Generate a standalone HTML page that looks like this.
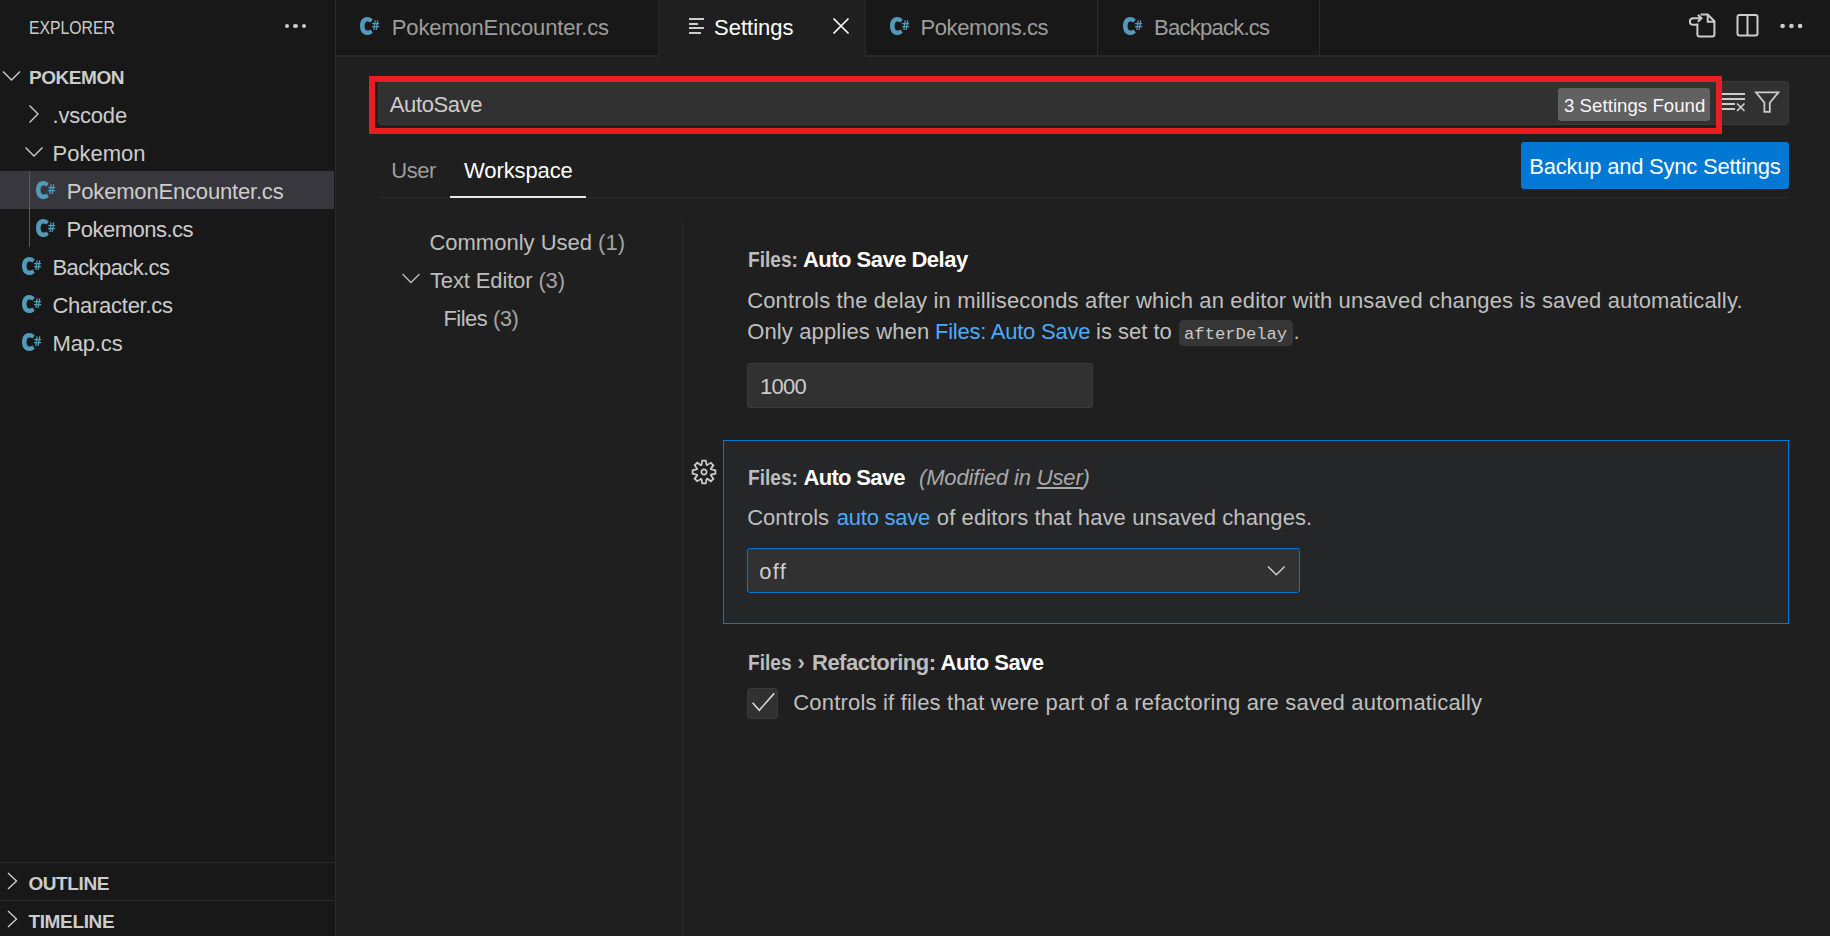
<!DOCTYPE html>
<html><head><meta charset="utf-8">
<style>
*{margin:0;padding:0;box-sizing:border-box}
html,body{width:1830px;height:936px;overflow:hidden;background:#1f1f1f;font-family:"Liberation Sans",sans-serif;color:#cccccc}
.a{position:absolute}
.b{position:absolute;line-height:0;white-space:nowrap;margin-top:1px}
.f22{font-size:22px}
.f19{font-size:19px}
svg{position:absolute;overflow:visible}
.sx{transform-origin:0 0}
</style></head><body>
<svg width="0" height="0" style="position:absolute">
 <defs>
  <g id="csi">
   <path fill="#519aba" d="M12.8 2.5C11.3 0.8 9.2 0 6.8 0C2.8 0 0 3.8 0 9C0 14.2 2.8 18 6.8 18C9.2 18 11.3 17.2 12.8 15.4L10.5 12.6C9.7 13.3 8.5 13.6 7.3 13.6C5.6 13.6 4.6 11.8 4.6 9C4.6 6.2 5.6 4.4 7.3 4.4C8.5 4.4 9.7 4.8 10.5 5.4Z"/>
   <path d="M15.1 3.3L13.9 13M17.7 3.3L16.2 13M12.1 6.7H19.2M12.1 9.7H19.2" stroke="#519aba" stroke-width="1.3" fill="none"/>
  </g>
 </defs>
</svg>

<!-- SIDEBAR -->
<div class="a" style="left:0;top:0;width:335px;height:936px;background:#181818"></div>
<div class="a" style="left:335px;top:0;width:1px;height:936px;background:#2b2b2b"></div>
<div class="b f19" style="left:29px;top:27.4px;color:#cccccc;transform:scaleX(0.83);transform-origin:0 0">EXPLORER</div>
<div class="a" style="left:284.5px;top:23.7px;width:4.6px;height:4.6px;border-radius:50%;background:#cccccc"></div>
<div class="a" style="left:293.3px;top:23.7px;width:4.6px;height:4.6px;border-radius:50%;background:#cccccc"></div>
<div class="a" style="left:301.9px;top:23.7px;width:4.6px;height:4.6px;border-radius:50%;background:#cccccc"></div>

<svg style="left:0;top:0" width="40" height="100"><path d="M3 71.5L11.5 80L20 71.5" stroke="#cccccc" stroke-width="1.4" fill="none"/></svg>
<div class="b f19" style="left:29px;top:77.4px;font-weight:bold;color:#cccccc;letter-spacing:-0.45px">POKEMON</div>

<svg style="left:0;top:0" width="60" height="200"><path d="M29.5 105.5L38 114L29.5 122.5" stroke="#cccccc" stroke-width="1.4" fill="none"/><path d="M25.5 147.5L34 156L42.5 147.5" stroke="#cccccc" stroke-width="1.4" fill="none"/></svg>
<div class="b f22" style="left:52.5px;top:115.4px;letter-spacing:-0.2px">.vscode</div>
<div class="b f22" style="left:52.5px;top:153.4px">Pokemon</div>

<div class="a" style="left:0;top:171px;width:334px;height:38px;background:#37373d"></div>
<div class="a" style="left:29px;top:171px;width:1px;height:76px;background:#585858"></div>
<svg style="left:35.8px;top:181px" width="20" height="18"><use href="#csi"/></svg>
<div class="b f22" style="left:66.8px;top:191.4px;letter-spacing:-0.18px">PokemonEncounter.cs</div>
<svg style="left:35.8px;top:219px" width="20" height="18"><use href="#csi"/></svg>
<div class="b f22" style="left:66.5px;top:229.4px;letter-spacing:-0.5px">Pokemons.cs</div>
<svg style="left:22px;top:257px" width="20" height="18"><use href="#csi"/></svg>
<div class="b f22" style="left:52.5px;top:267.4px;letter-spacing:-0.6px">Backpack.cs</div>
<svg style="left:22px;top:295px" width="20" height="18"><use href="#csi"/></svg>
<div class="b f22" style="left:52.5px;top:305.4px;letter-spacing:-0.27px">Character.cs</div>
<svg style="left:22px;top:333px" width="20" height="18"><use href="#csi"/></svg>
<div class="b f22" style="left:52.5px;top:343.4px;letter-spacing:-0.15px">Map.cs</div>

<div class="a" style="left:0;top:862px;width:334px;height:1px;background:#2b2b2b"></div>
<div class="a" style="left:0;top:900px;width:334px;height:1px;background:#2b2b2b"></div>
<svg style="left:0;top:0" width="40" height="936"><path d="M8 873L16.5 881L8 889" stroke="#cccccc" stroke-width="1.4" fill="none"/><path d="M8 911L16.5 919L8 927" stroke="#cccccc" stroke-width="1.4" fill="none"/></svg>
<div class="b f19" style="left:28.4px;top:882.9px;font-weight:bold;letter-spacing:-0.4px">OUTLINE</div>
<div class="b f19" style="left:28.4px;top:920.7px;font-weight:bold;letter-spacing:-0.35px">TIMELINE</div>

<!-- TABS -->
<div class="a" style="left:336px;top:0;width:1494px;height:55px;background:#181818"></div>
<div class="a" style="left:336px;top:55px;width:1494px;height:2px;background:#2b2b2b"></div>
<div class="a" style="left:658px;top:0;width:1px;height:55px;background:#2b2b2b"></div>
<div class="a" style="left:659px;top:0;width:206px;height:57px;background:#1f1f1f"></div>
<div class="a" style="left:865px;top:0;width:1px;height:55px;background:#2b2b2b"></div>
<div class="a" style="left:1097px;top:0;width:1px;height:55px;background:#2b2b2b"></div>
<div class="a" style="left:1319px;top:0;width:1px;height:55px;background:#2b2b2b"></div>

<svg style="left:360.4px;top:17.2px" width="20" height="18"><use href="#csi"/></svg>
<div class="b f22" style="left:391.8px;top:27.4px;color:#9d9d9d;letter-spacing:-0.16px">PokemonEncounter.cs</div>
<svg style="left:0;top:0" width="720" height="50"><path d="M689 19H704M689 24H698M689 28H704M689 33H701" stroke="#cccccc" stroke-width="2" fill="none"/></svg>
<div class="b f22" style="left:714px;top:27.4px;color:#ffffff">Settings</div>
<svg style="left:0;top:0" width="860" height="50"><path d="M833.5 18.5L848.5 33.5M848.5 18.5L833.5 33.5" stroke="#ffffff" stroke-width="1.7" fill="none"/></svg>
<svg style="left:890px;top:17.2px" width="20" height="18"><use href="#csi"/></svg>
<div class="b f22" style="left:920.5px;top:27.4px;color:#9d9d9d;letter-spacing:-0.4px">Pokemons.cs</div>
<svg style="left:1122.6px;top:17px" width="20" height="18"><use href="#csi"/></svg>
<div class="b f22" style="left:1154px;top:27.4px;color:#9d9d9d;letter-spacing:-0.75px">Backpack.cs</div>

<svg style="left:0;top:0" width="1830" height="50">
 <g stroke="#cccccc" stroke-width="2" fill="none">
  <path d="M1697.4 23.5V34.6Q1697.4 36.6 1699.4 36.6H1712.4Q1714.4 36.6 1714.4 34.6V21.2L1707.7 14.5H1700.6"/>
  <path d="M1707.7 14.5V21.7H1714.4"/>
  <path d="M1697.5 24.8H1693.5Q1689.9 24.8 1689.9 21.5Q1689.9 18.2 1693.5 18.2H1701.2M1697.9 14.7L1701.5 18.2L1697.9 21.7"/>
  <rect x="1737.5" y="14.9" width="20" height="20.7" rx="2"/>
  <path d="M1747.5 14.9V35.6"/>
 </g>
 <circle cx="1782.6" cy="26" r="2.3" fill="#cccccc"/>
 <circle cx="1791.4" cy="26" r="2.3" fill="#cccccc"/>
 <circle cx="1800.1" cy="26" r="2.3" fill="#cccccc"/>
</svg>

<!-- SEARCH -->
<div class="a" style="left:378px;top:81px;width:1411px;height:44px;background:#313131;border:1px solid #3c3c3c;border-radius:4px"></div>
<div class="a" style="left:369px;top:76px;width:353px;height:58px;border:6px solid #e81d25;width:1353px"></div>
<div class="b f22" style="left:389.8px;top:104.2px;color:#cccccc;letter-spacing:-0.38px">AutoSave</div>
<div class="a" style="left:1558px;top:88px;width:152px;height:33px;background:#616161;border-radius:3px"></div>
<div class="b" style="left:1564px;top:104.8px;color:#f8f8f8;font-size:18.6px;letter-spacing:0.05px">3 Settings Found</div>
<svg style="left:0;top:0" width="1830" height="140">
 <g stroke="#cccccc" stroke-width="2" fill="none">
  <path d="M1722 94H1745M1722 99H1745M1722 104H1735M1722 109H1735"/>
  <path d="M1737 103.5L1744.5 111M1744.5 103.5L1737 111" stroke-width="1.7"/>
  <path d="M1756 92.4H1778.4L1769.8 102.8V111.8H1764.4V102.8Z" stroke-width="1.8"/>
 </g>
</svg>

<!-- USER/WORKSPACE -->
<div class="b f22" style="left:391.3px;top:170.4px;color:#9d9d9d;letter-spacing:-0.45px">User</div>
<div class="b f22" style="left:464px;top:170.4px;color:#ffffff;letter-spacing:-0.1px">Workspace</div>
<div class="a" style="left:378px;top:197px;width:1411px;height:1px;background:#2b2b2b"></div>
<div class="a" style="left:450px;top:196px;width:136px;height:2px;background:#e7e7e7"></div>
<div class="a" style="left:1521px;top:142px;width:268px;height:47px;background:#0078d4;border-radius:3px"></div>
<div class="b f22" style="left:1529.3px;top:166.4px;color:#ffffff;letter-spacing:-0.23px">Backup and Sync Settings</div>

<!-- TOC -->
<div class="a" style="left:682px;top:222px;width:1px;height:714px;background:#2b2b2b"></div>
<div class="b f22" style="left:429.4px;top:242.4px;color:#bdbdbd">Commonly Used <span style="color:#a3a3a3">(1)</span></div>
<svg style="left:0;top:0" width="440" height="300"><path d="M402.5 274L411 282.5L419.5 274" stroke="#bbbbbb" stroke-width="1.4" fill="none"/></svg>
<div class="b f22" style="left:430px;top:280.4px;color:#bdbdbd;letter-spacing:-0.14px">Text Editor <span style="color:#a3a3a3">(3)</span></div>
<div class="b f22" style="left:443.4px;top:318.4px;color:#bdbdbd;letter-spacing:-0.5px">Files <span style="color:#a3a3a3">(3)</span></div>

<!-- SETTING 1 -->
<div class="b f22 sx" id="t1a" style="left:748px;top:259.1px;font-weight:bold;color:#bdbdbd;transform:scaleX(0.87)">Files:</div>
<div class="b f22" id="t1b" style="left:803px;top:259.1px;font-weight:bold;color:#ffffff;letter-spacing:-0.52px">Auto Save Delay</div>
<div class="b f22" style="left:747.2px;top:300.1px;color:#bfbfbf;letter-spacing:0.15px">Controls the delay in milliseconds after which an editor with unsaved changes is saved automatically.</div>
<div class="b f22" id="d1a" style="left:747.2px;top:331.2px;color:#bfbfbf;letter-spacing:0.14px">Only applies when</div>
<div class="b f22" id="d1b" style="left:935px;top:331.2px;color:#4daafc;letter-spacing:-0.24px">Files: Auto Save</div>
<div class="b f22" id="d1c" style="left:1096px;top:331.2px;color:#bfbfbf">is set to</div>
<div class="a" style="left:1179px;top:320px;width:114px;height:26px;background:#363636;border-radius:5px"></div>
<div class="b" id="d1d" style="left:1184px;top:333.8px;color:#c8c8c8;font-family:'Liberation Mono',monospace;font-size:17.2px">afterDelay</div>
<div class="b f22" style="left:1293.5px;top:331.2px;color:#bfbfbf">.</div>
<div class="a" style="left:747px;top:363px;width:346px;height:45px;background:#313131;border:1px solid #3c3c3c;border-radius:3px"></div>
<div class="b f22" style="left:760px;top:386.1px;color:#cccccc;letter-spacing:-0.7px">1000</div>

<!-- SETTING 2 -->
<div class="a" style="left:723px;top:440px;width:1066px;height:184px;border:1px solid #0078d4;background:#252628"></div>
<div class="b f22 sx" id="t2a" style="left:748px;top:477.4px;font-weight:bold;color:#bdbdbd;transform:scaleX(0.87)">Files:</div>
<div class="b f22" id="t2b" style="left:803.5px;top:477.4px;font-weight:bold;color:#ffffff;letter-spacing:-0.7px">Auto Save</div>
<div class="b f22" id="t2c" style="left:919px;top:477.4px;font-style:italic;color:#a8a8a8;letter-spacing:-0.16px">(Modified in <span style="text-decoration:underline;text-underline-offset:2px">User</span>)</div>
<div class="b f22" id="d2a" style="left:747.2px;top:516.8px;color:#bfbfbf">Controls</div>
<div class="b f22" id="d2b" style="left:836.8px;top:516.8px;color:#4daafc;letter-spacing:-0.25px">auto save</div>
<div class="b f22" id="d2c" style="left:936.8px;top:516.8px;color:#bfbfbf;letter-spacing:0.1px">of editors that have unsaved changes.</div>
<div class="a" style="left:747px;top:548px;width:553px;height:45px;background:#313131;border:1px solid #0078d4;border-radius:3px"></div>
<div class="b f22" style="left:759.2px;top:570.7px;color:#cccccc;letter-spacing:1.3px">off</div>
<svg style="left:0;top:0" width="1300" height="600"><path d="M1268 566.6L1276.3 574.8L1284.6 566.6" stroke="#d0d0d0" stroke-width="1.4" fill="none"/></svg>
<svg style="left:690.4px;top:457.9px" width="28" height="28" viewBox="0 0 16 16"><path fill="#cccccc" d="M9.1 4.4L8.6 2H7.4l-.5 2.4-.7.3-2-1.3-.9.8 1.3 2-.2.7-2.4.5v1.2l2.4.5.3.8-1.3 2 .8.8 2-1.3.8.3.4 2.3h1.2l.5-2.4.8-.3 2 1.3.8-.8-1.3-2 .3-.8 2.3-.4V7.4l-2.4-.5-.3-.8 1.3-2-.8-.8-2 1.3-.7-.2zM9.4 1l.5 2.4L12 2.1l2 2-1.4 2.1 2.4.4v2.8l-2.4.5L14 12l-2 2-2.1-1.4-.5 2.4H6.6l-.5-2.4L4 13.9l-2-2 1.4-2.1L1 9.4V6.6l2.4-.5L2.1 4l2-2 2.1 1.4.4-2.4h2.8zm.6 7c0 1.1-.9 2-2 2s-2-.9-2-2 .9-2 2-2 2 .9 2 2zM8 9c.6 0 1-.4 1-1s-.4-1-1-1-1 .4-1 1 .4 1 1 1z"/></svg>

<!-- SETTING 3 -->
<div class="b f22 sx" id="t3a" style="left:748px;top:661.9px;font-weight:bold;color:#bdbdbd;transform:scaleX(0.87)">Files</div>
<div class="b f22" id="t3s" style="left:797.5px;top:661.9px;font-weight:bold;color:#bdbdbd">›</div>
<div class="b f22" id="t3b" style="left:812px;top:661.9px;font-weight:bold;color:#bdbdbd;letter-spacing:-0.5px">Refactoring:</div>
<div class="b f22" id="t3c" style="left:940.5px;top:661.9px;font-weight:bold;color:#ffffff;letter-spacing:-0.5px">Auto Save</div>
<div class="a" style="left:747px;top:688px;width:31px;height:31px;background:#313131;border:1px solid #3c3c3c;border-radius:4px"></div>
<svg style="left:0;top:0" width="800" height="730"><path d="M752.6 702.8L759.3 710.2L774.2 693.4" stroke="#d8d8d8" stroke-width="1.6" fill="none"/></svg>
<div class="b f22" style="left:793.3px;top:702.2px;color:#bfbfbf;letter-spacing:0.19px">Controls if files that were part of a refactoring are saved automatically</div>
</body></html>
